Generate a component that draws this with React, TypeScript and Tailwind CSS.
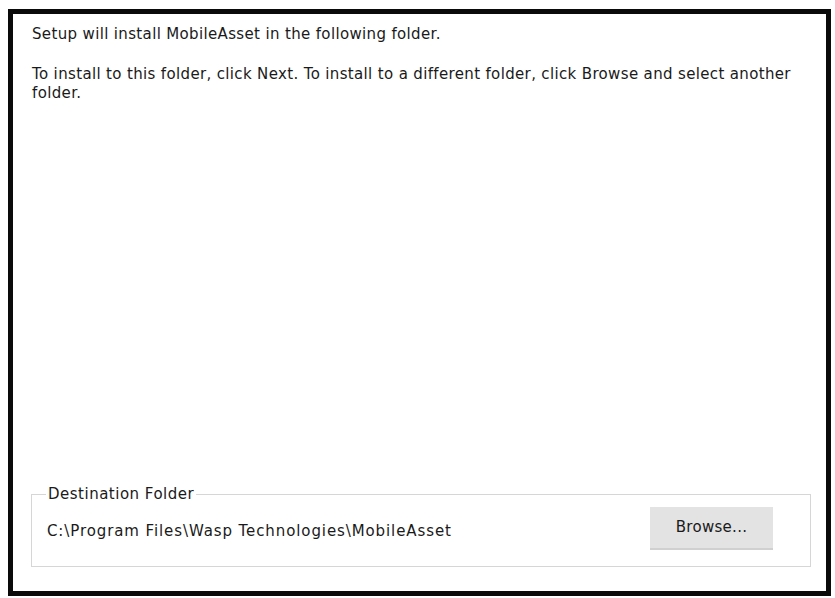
import React from 'react'

const App = () => {
  return (
    <div className="w-[835px] h-[598px] bg-white pt-[9px] pl-[8px]" style={{ fontFamily: '"DejaVu Sans", Verdana, sans-serif' }}>
      <div className="w-[823px] h-[587px] border-[5px] border-[#0a0a0a] flex flex-col text-[#1a1a1a] text-[15px] leading-[19px] tracking-[0.35px]">
        <div className="pl-[19px] pr-[10px] pt-[11px]">
          <p>Setup will install MobileAsset in the following folder.</p>
          <p className="mt-[21px]">
            To install to this folder, click Next. To install to a different folder, click Browse and select another folder.
          </p>
        </div>
        <div className="flex-1" />
        <fieldset className="ml-[18px] mr-[15px] mb-[24px] border border-[#d6d6d6] pl-[14px] pr-[37px] pb-[16px]">
          <legend className="px-[2px] tracking-[0.5px]">Destination Folder</legend>
          <div className="flex items-center justify-between mt-[3px]">
            <span className="pl-[1px] pt-[6px] tracking-[0.9px]">C:\Program Files\Wasp Technologies\MobileAsset</span>
            <button className="w-[123px] h-[43px] bg-[#e3e3e3] border-b-2 border-[#d0d0d0] tracking-[0.3px]">
              Browse...
            </button>
          </div>
        </fieldset>
      </div>
    </div>
  )
}

export default App
